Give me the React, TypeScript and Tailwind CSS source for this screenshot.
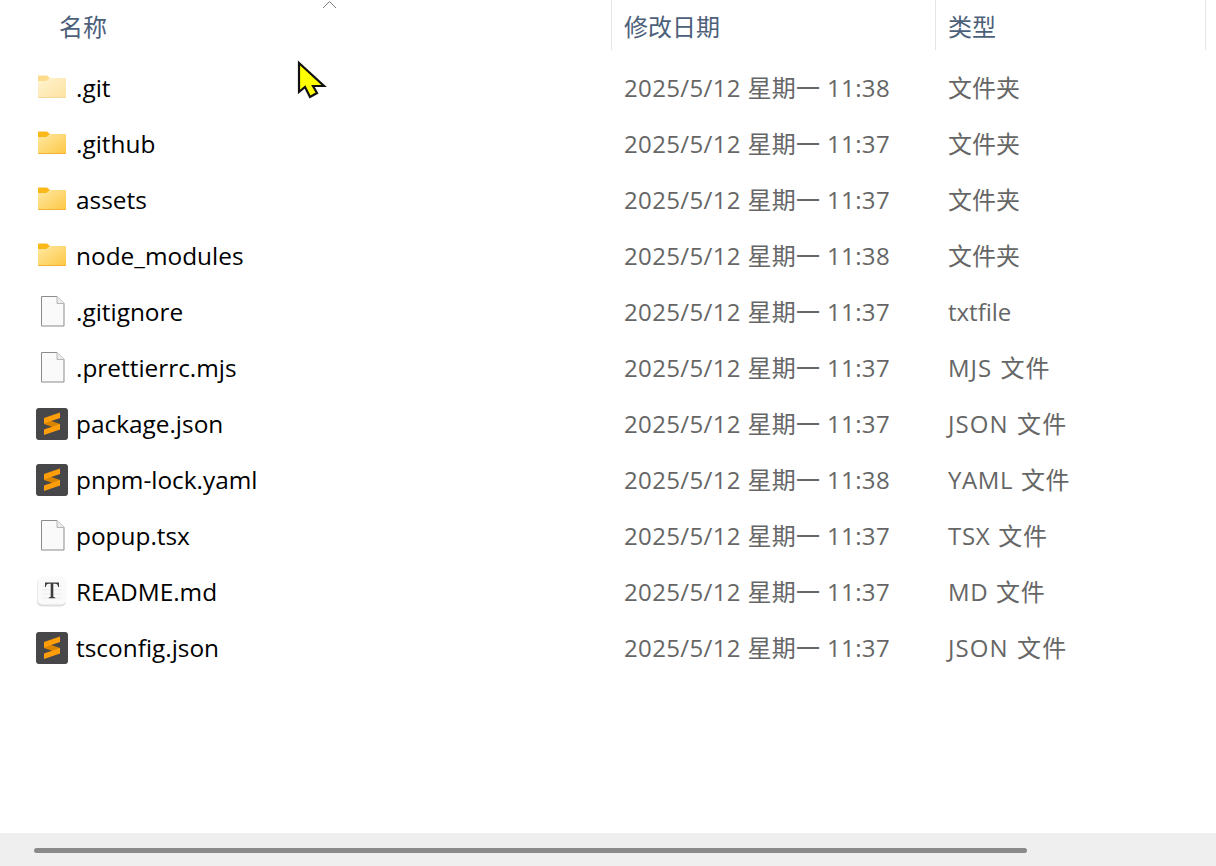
const FONT = '"Open Sans", "Noto Sans CJK SC", sans-serif'

type Kind = 'folder' | 'folderHidden' | 'file' | 'sublime' | 'typora'

interface Entry {
    name: string
    date: string
    type: string
    kind: Kind
    typeClass?: string
}

const entries: Entry[] = [
    { name: '.git', date: '2025/5/12 星期一 11:38', type: '文件夹', kind: 'folderHidden' },
    { name: '.github', date: '2025/5/12 星期一 11:37', type: '文件夹', kind: 'folder' },
    { name: 'assets', date: '2025/5/12 星期一 11:37', type: '文件夹', kind: 'folder' },
    { name: 'node_modules', date: '2025/5/12 星期一 11:38', type: '文件夹', kind: 'folder' },
    { name: '.gitignore', date: '2025/5/12 星期一 11:37', type: 'txtfile', kind: 'file' },
    { name: '.prettierrc.mjs', date: '2025/5/12 星期一 11:37', type: 'MJS 文件', kind: 'file', typeClass: 'tracking-[1px]' },
    { name: 'package.json', date: '2025/5/12 星期一 11:37', type: 'JSON 文件', kind: 'sublime', typeClass: 'tracking-[1.1px]' },
    { name: 'pnpm-lock.yaml', date: '2025/5/12 星期一 11:38', type: 'YAML 文件', kind: 'sublime', typeClass: 'tracking-[0.6px]' },
    { name: 'popup.tsx', date: '2025/5/12 星期一 11:37', type: 'TSX 文件', kind: 'file', typeClass: 'tracking-[0.7px]' },
    { name: 'README.md', date: '2025/5/12 星期一 11:37', type: 'MD 文件', kind: 'typora', typeClass: 'tracking-[0.6px]' },
    { name: 'tsconfig.json', date: '2025/5/12 星期一 11:37', type: 'JSON 文件', kind: 'sublime', typeClass: 'tracking-[1.1px]' },
]

function FolderIcon({ hidden }: { hidden?: boolean }) {
    return (
        <svg width="32" height="32" viewBox="0 0 32 32" className={hidden ? 'opacity-50' : ''}>
            <defs>
                <linearGradient id="folderFill" x1="0" y1="0" x2="1" y2="1">
                    <stop offset="0" stopColor="#ffe9a3" />
                    <stop offset="1" stopColor="#fdc744" />
                </linearGradient>
            </defs>
            <path d="M2 4.500C2 3.900 2.500 3.500 3 3.500h7.500c.5 0 .9.200 1.200.500L14 6v3H2z" fill="#fbb819" />
            <path d="M2 9h8.500L13.500 6H29c.6 0 1 .4 1 1v18c0 .6-.4 1-1 1H3c-.6 0-1-.4-1-1z" fill="url(#folderFill)" />
            <path d="M2 25h28v.2c0 .5-.4.8-.8.8H2.800c-.4 0-.8-.3-.8-.8z" fill="#f3b234" />
        </svg>
    )
}

function FileIcon() {
    return (
        <svg width="32" height="32" viewBox="0 0 32 32">
            <path d="M5.500.5h15.500l7 7v22.500h-22.500z" fill="#fafafa" stroke="#8c8c8c" strokeWidth="1" />
            <path d="M21 .5v7h7" fill="#ededed" stroke="#b5b5b5" strokeWidth="1" />
        </svg>
    )
}

function SublimeIcon() {
    return (
        <svg width="32" height="32" viewBox="0 0 32 32">
            <rect x="0" y="0" width="32" height="32" rx="3" fill="#47474a" />
            <path d="M8 10.500l16 5.500v5.500L8 16z" fill="#d98500" />
            <path d="M24 4.500L8 10v5.500l16-5.500z" fill="#ff9d0a" />
            <path d="M24 16L8 21.500V27l16-5.500z" fill="#ff9d0a" />
        </svg>
    )
}

function TyporaIcon() {
    return (
        <svg width="32" height="32" viewBox="0 0 32 32">
            <rect x="1" y="1.500" width="29" height="29" rx="5" fill="#dedede" />
            <rect x="1.500" y="0.500" width="29" height="28" rx="5" fill="#fafafa" />
            <path d="M6 10h20M6 14h20M6 18h20M6 22h20" stroke="#ececec" strokeWidth="1" />
            <path d="M9 6.500h14v4.500h-.8c-.3-2.200-1.100-3.300-3.200-3.300h-1.700v12.600c0 .8.500 1 2 1.100v.8h-6.600v-.8c1.500-.1 2-.3 2-1.100V7.700H13c-2.100 0-2.900 1.100-3.200 3.300H9z" fill="#3d3d3d" />
        </svg>
    )
}

function EntryIcon({ kind }: { kind: Kind }) {
    if (kind === 'folder') return <FolderIcon />
    if (kind === 'folderHidden') return <FolderIcon hidden />
    if (kind === 'sublime') return <SublimeIcon />
    if (kind === 'typora') return <TyporaIcon />
    return <FileIcon />
}

export default function App() {
    return (
        <div
            className="relative flex h-[866px] w-[1216px] flex-col overflow-hidden bg-white text-[24px]"
            style={{ fontFamily: FONT }}
        >
            {/* Column headers */}
            <div className="flex h-[50px] text-[#4c607a]">
                <div className="flex w-[611px] items-center pl-[59px] pt-1">名称</div>
                <div className="flex w-[324px] items-center border-l border-[#e5e5e5] pl-3 pt-1">修改日期</div>
                <div className="flex w-[271px] items-center border-x border-[#e5e5e5] pl-3 pt-1">类型</div>
            </div>

            {/* Sort arrow */}
            <svg className="absolute left-[322px] top-0" width="15" height="9" viewBox="0 0 15 9">
                <path d="M1 8l6.500-6.500L14 8" fill="none" stroke="#7a7a7a" strokeWidth="1" />
            </svg>

            {/* Rows */}
            <div className="mt-[10px] flex flex-1 flex-col">
                {entries.map((entry) => (
                    <div key={entry.name} className="flex h-14 items-center">
                        <div className="flex w-[611px] items-center pl-9 text-[24.4px] text-[#000]">
                            <div className="flex h-8 w-8 shrink-0 items-center justify-center">
                                <EntryIcon kind={entry.kind} />
                            </div>
                            <span className="ml-2 whitespace-nowrap">{entry.name}</span>
                        </div>
                        <div className="w-[325px] whitespace-nowrap pl-[13px] tracking-[0.35px] text-[#666666]">
                            {entry.date}
                        </div>
                        <div className={`whitespace-nowrap pl-3 text-[#666666] [word-spacing:1px] ${entry.typeClass ?? ''}`}>
                            {entry.type}
                        </div>
                    </div>
                ))}
            </div>

            {/* Horizontal scrollbar */}
            <div className="flex h-[33px] items-center bg-[#efefef] pl-[34px]">
                <div className="mt-[1px] h-[5px] w-[993px] rounded-full bg-[#8a8a8a]" />
            </div>

            {/* Mouse pointer highlight */}
            <svg className="absolute left-[297px] top-[60px]" width="30" height="40" viewBox="0 0 30 40">
                <path d="M2 3v29l6-5 5 10 7-4-4-7h11z" fill="#ffff00" stroke="#111" strokeWidth="2.200" strokeLinejoin="miter" />
            </svg>
        </div>
    )
}
